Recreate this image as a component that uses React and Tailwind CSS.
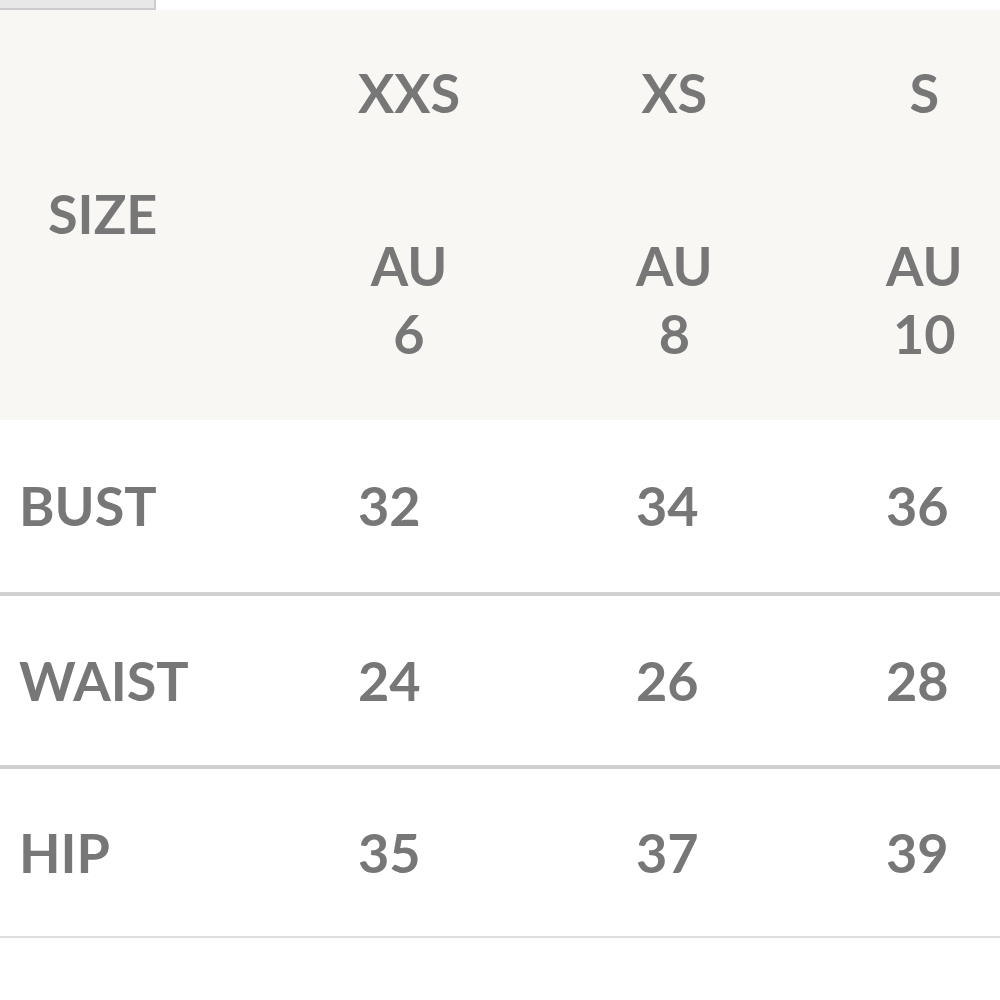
export default function App() {
  const font = { fontFamily: 'Lato, "Noto Sans", sans-serif' };
  const rows = [
    ["BUST", "32", "34", "36", "border-b-[4px] border-[#d0d0d0]", "h-[176px]"],
    ["WAIST", "24", "26", "28", "border-b-[4px] border-[#d0d0d0]", "h-[173px]"],
    ["HIP", "35", "37", "39", "border-b-[2px] border-[#dedede]", "h-[169px]"],
  ];
  const sizes = [
    ["XXS", "6"],
    ["XS", "8"],
    ["S", "10"],
  ];
  return (
    <div className="w-[1000px] h-[1000px] overflow-hidden bg-white text-[#777777] font-bold text-[54px]" style={font}>
      <div className="h-[10px] flex">
        <div className="w-[156px] h-[10px] bg-[#e8e8e8] border-r-[2px] border-b-[2px] border-[#cccccc]" />
      </div>
      <div className="grid grid-cols-[338px_278px_250px_1fr] bg-[#f9f7f4] h-[410px]">
        <div className="flex items-center pl-[48px] leading-none pb-[2px]">SIZE</div>
        {sizes.map(([s, n]) => (
          <div key={s} className="pl-5 pt-[42px]">
            <div className="inline-flex flex-col items-center leading-[68px]">
              <div>{s}</div>
              <div className="mt-[105px] flex flex-col items-center">
                <span>AU</span>
                <span>{n}</span>
              </div>
            </div>
          </div>
        ))}
      </div>
      {rows.map(([label, a, b, c, border, h]) => (
        <div key={label} className={`grid grid-cols-[338px_278px_250px_1fr] items-center ${border} ${h}`}>
          <div className="pl-[19px] leading-none">{label}</div>
          <div className="pl-5 leading-none">{a}</div>
          <div className="pl-5 leading-none">{b}</div>
          <div className="pl-5 leading-none">{c}</div>
        </div>
      ))}
    </div>
  );
}
